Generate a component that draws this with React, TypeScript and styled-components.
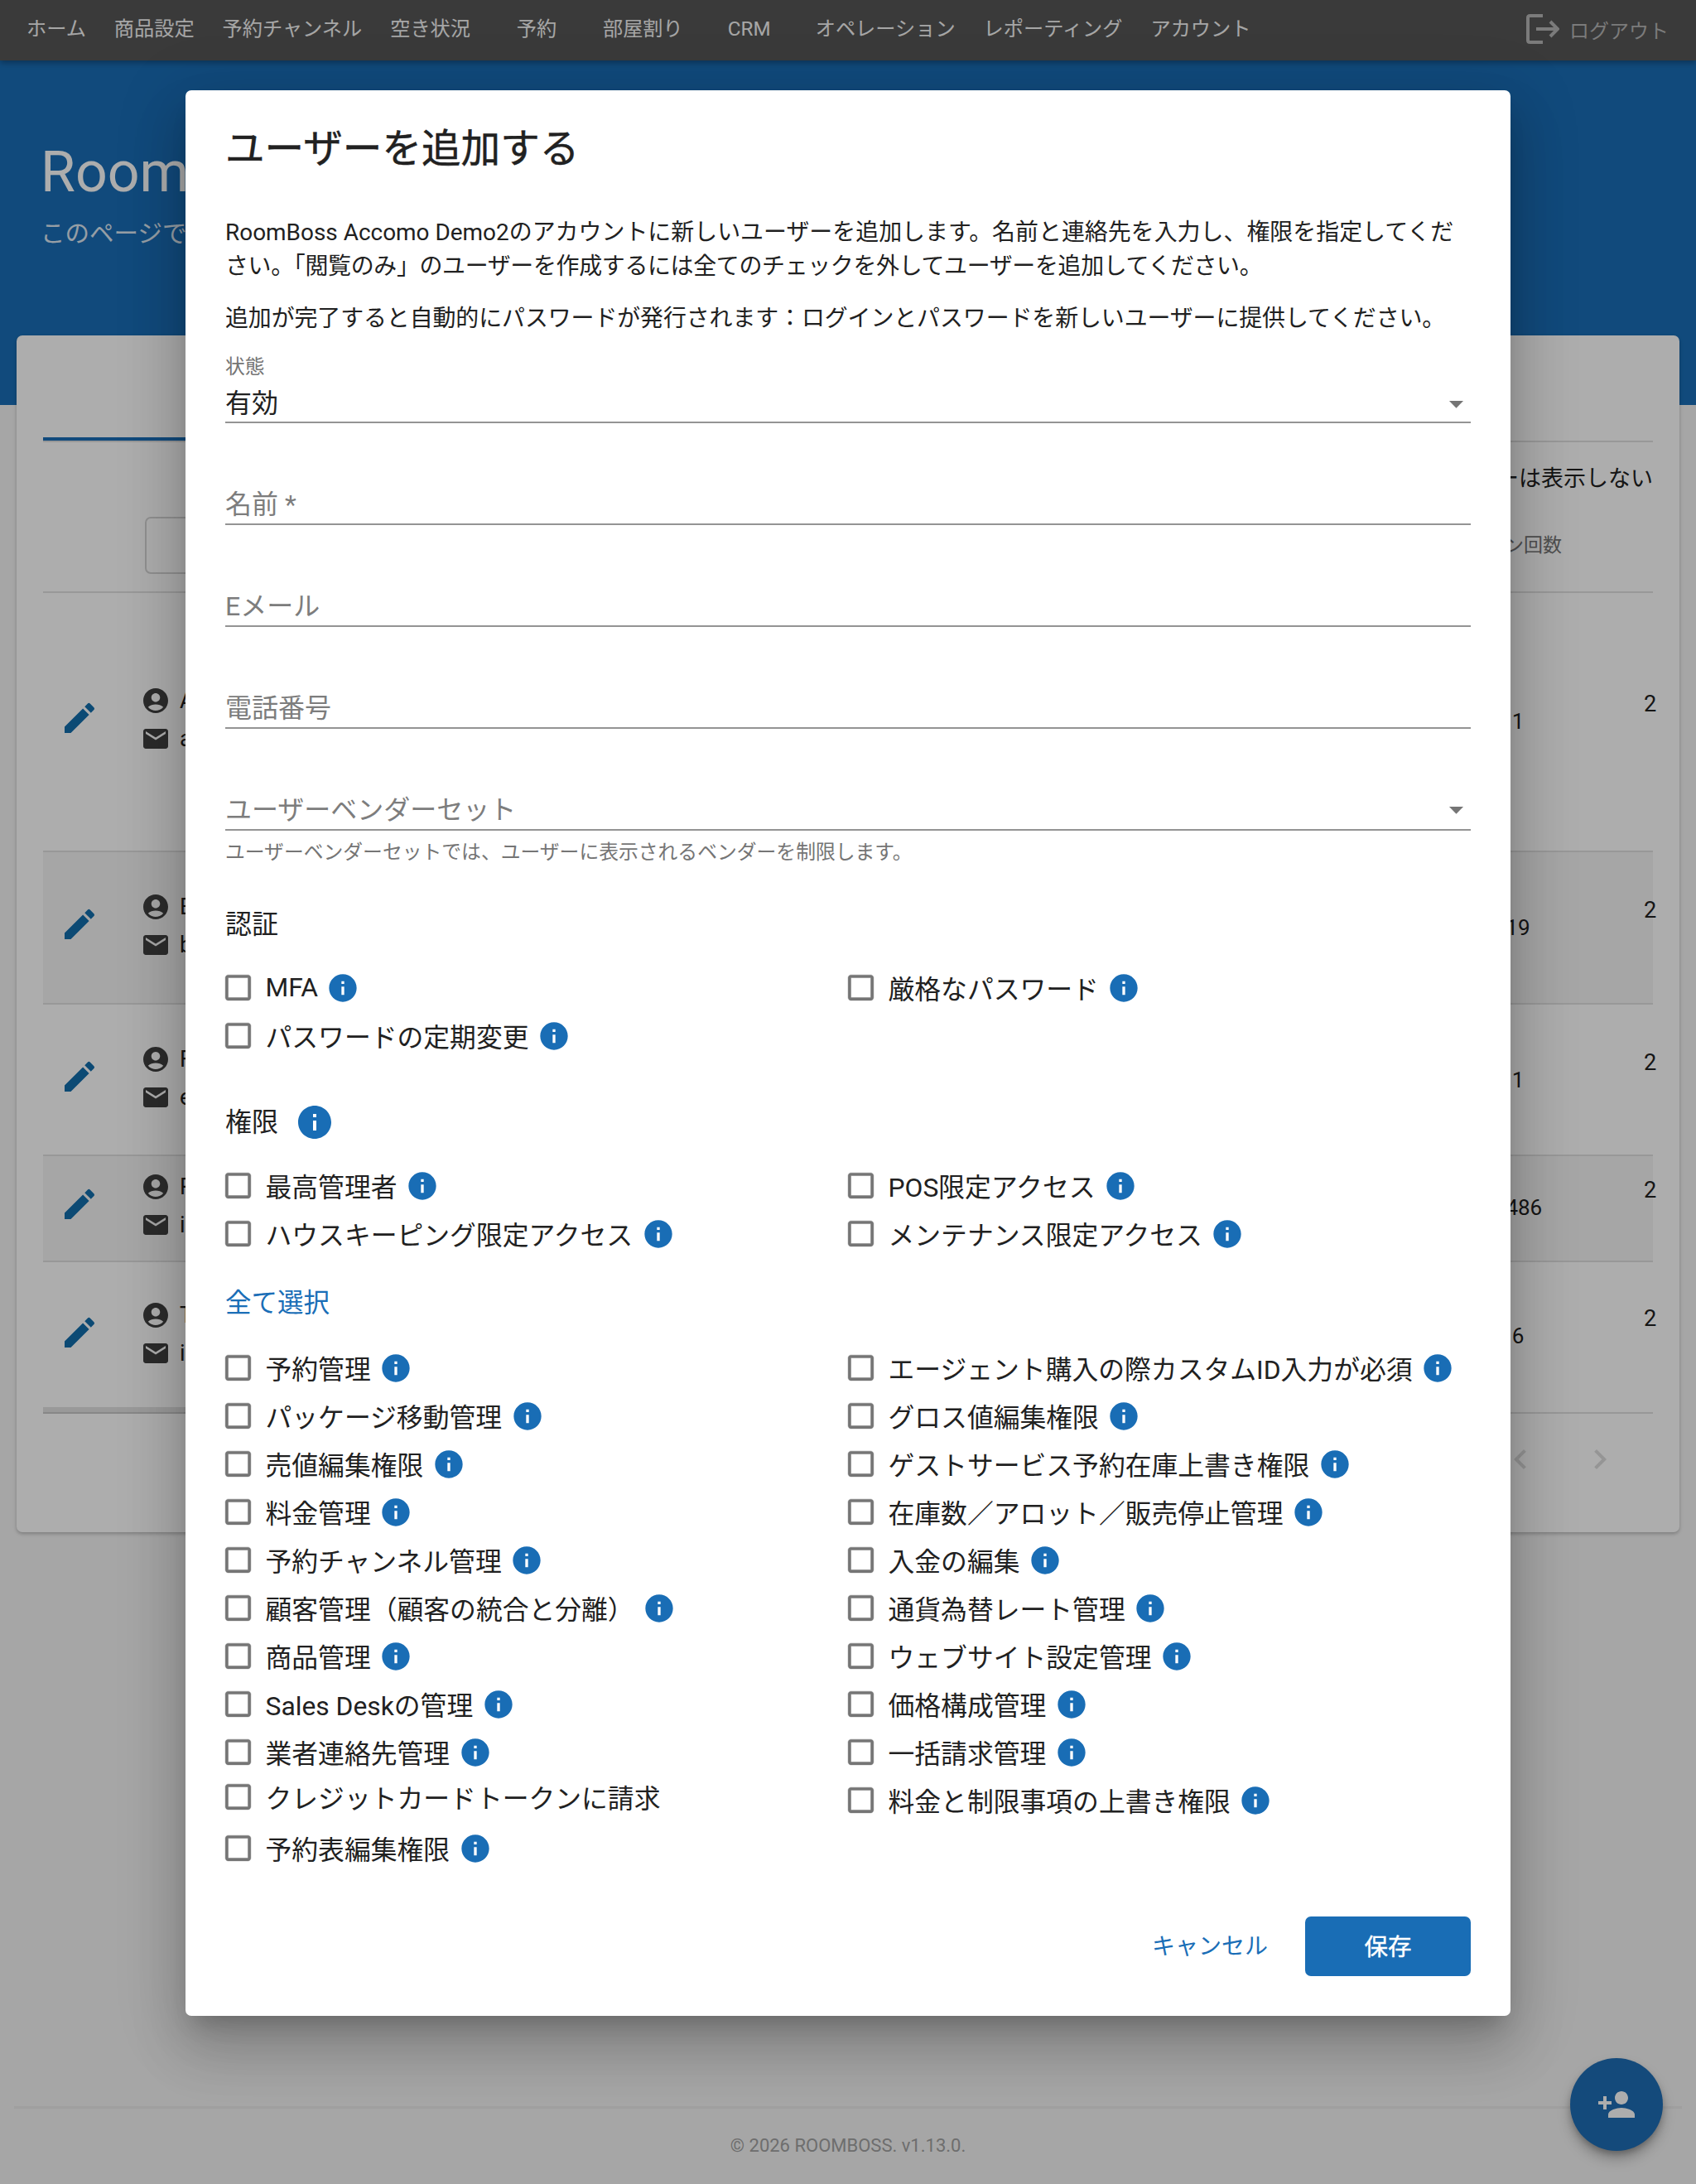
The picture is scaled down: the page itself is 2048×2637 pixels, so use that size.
import styled, { createGlobalStyle } from "styled-components";

const GlobalStyle = createGlobalStyle`
  * {
    box-sizing: border-box;
  }
  html, body {
    margin: 0;
    padding: 0;
  }
  body {
    background: #f5f5f5;
    color: #212121;
    font-family: Roboto, "Noto Sans CJK JP", sans-serif;
    overflow: hidden;
  }
`;

const Page = styled.div`
  position: relative;
  width: 2048px;
  height: 2637px;
  overflow: hidden;
`;

/* ---------- page behind the dialog ---------- */

const NavBar = styled.nav`
  position: relative;
  z-index: 1;
  height: 73px;
  padding: 0 33px 3px 15px;
  display: flex;
  align-items: center;
  background: #565656;
  box-shadow: 0 3px 7px rgba(0, 0, 0, 0.3);
`;

const NavItem = styled.a<{ $wide?: boolean }>`
  min-width: ${(p) => (p.$wide ? "126px" : "0")};
  padding: 0 17px;
  text-align: center;
  font-size: 24.2px;
  line-height: 34px;
  white-space: nowrap;
  color: #f5f5f5;
`;

const Logout = styled.a`
  margin-left: auto;
  display: flex;
  align-items: center;
  gap: 12px;
  font-size: 24px;
  color: #b5b5b5;
`;

const Hero = styled.header`
  height: 416px;
  padding: 85px 0 0 49px;
  background: #1a6eb7;
  color: #fff;
`;

const HeroTitle = styled.h1`
  margin: 0;
  font-size: 68px;
  line-height: 100px;
  font-weight: 400;
`;

const HeroText = styled.p`
  margin: 4px 0 0;
  font-size: 29.5px;
  line-height: 40px;
  opacity: 0.85;
`;

const Card = styled.section`
  margin: -84px 20px 0;
  height: 1445px;
  padding: 0 32px;
  background: #fff;
  border-radius: 7px;
  box-shadow: 0 2px 4px rgba(0, 0, 0, 0.25);
`;

const TabBar = styled.div`
  height: 129px;
  border-bottom: 2px solid #e0e0e0;
`;

const ActiveTab = styled.div`
  width: 400px;
  height: 127px;
  border-bottom: 4px solid #1a6eb7;
`;

const ToggleRow = styled.div`
  padding: 24px 0 0 0;
  text-align: right;
  font-size: 27px;
  line-height: 40px;
`;

const TableHead = styled.div`
  margin-top: 26px;
  padding: 0 110px 21px 123px;
  display: flex;
  justify-content: space-between;
  align-items: center;
  border-bottom: 2px solid #e0e0e0;
`;

const SearchBox = styled.div`
  width: 520px;
  height: 69px;
  border: 2px solid #d4d4d4;
  border-radius: 7px;
`;

const HeadLabel = styled.span`
  padding-bottom: 6px;
  font-size: 23px;
  color: #757575;
`;

const Row = styled.div<{ $height: number; $top: number; $shaded?: boolean }>`
  position: relative;
  height: ${(p) => p.$height}px;
  padding-top: ${(p) => p.$top}px;
  display: grid;
  grid-template-columns: 121px 1607px 106px 110px;
  align-items: start;
  background: ${(p) => (p.$shaded ? "#f5f5f5" : "#fff")};
  border-bottom: 2px solid #e0e0e0;
`;

const ScrollThumb = styled.div`
  position: absolute;
  left: 0;
  bottom: -2px;
  width: 420px;
  height: 8px;
  background: #e2e2e2;
  border-bottom: 2px solid #c8c8c8;
`;

const EditCell = styled.div`
  margin-top: 15px;
  padding-left: 20px;
  display: flex;
`;

const UserCell = styled.div`
  margin-left: -3px;
  display: flex;
  flex-direction: column;
  gap: 10px;
`;

const UserLine = styled.div`
  display: flex;
  align-items: center;
  gap: 11px;
  font-size: 27px;
  line-height: 36px;
`;

const CountCell = styled.div`
  margin-top: 23px;
  text-align: center;
  font-size: 26px;
  line-height: 40px;
`;

const DateCell = styled.div`
  margin-top: 2px;
  padding-left: 99px;
  font-size: 27.2px;
  line-height: 40px;
  white-space: nowrap;
`;

const Pagination = styled.div`
  padding: 31px 40px 0 0;
  display: flex;
  justify-content: flex-end;
  gap: 48px;
`;

const Footer = styled.footer`
  margin: 693px 17px 0;
  padding-top: 29px;
  border-top: 3px solid #ebebeb;
  text-align: center;
  font-size: 22px;
  line-height: 32px;
  color: #a2a2a2;
`;

const Fab = styled.button`
  position: absolute;
  left: 1896px;
  top: 2485px;
  width: 112px;
  height: 112px;
  padding: 0;
  border: 0;
  border-radius: 50%;
  display: flex;
  align-items: center;
  justify-content: center;
  background: #1e6db5;
  box-shadow: 0 5px 9px -2px rgba(0, 0, 0, 0.3), 0 10px 16px 1px rgba(0, 0, 0, 0.2);
`;

/* ---------- dialog ---------- */

const Backdrop = styled.div`
  position: absolute;
  inset: 0;
  z-index: 2;
  padding-top: 109px;
  display: flex;
  justify-content: center;
  align-items: flex-start;
  background: rgba(0, 0, 0, 0.32);
`;

const Dialog = styled.div`
  width: 1600px;
  height: 2325px;
  padding: 33px 48px 0;
  background: #fff;
  border-radius: 7px;
  box-shadow: 0 19px 26px -12px rgba(0, 0, 0, 0.2), 0 41px 65px 5px rgba(0, 0, 0, 0.14),
    0 15px 78px 14px rgba(0, 0, 0, 0.12);
`;

const DialogTitle = styled.h2`
  margin: 0;
  font-size: 47.6px;
  line-height: 76px;
  font-weight: 400;
  -webkit-text-stroke: 0.5px #212121;
`;

const Paragraph = styled.p<{ $top: number }>`
  margin: ${(p) => p.$top}px 0 0;
  font-size: 27.95px;
  line-height: 40.8px;
`;

const TightLine = styled.span<{ $spacing: number }>`
  letter-spacing: ${(p) => p.$spacing}px;
`;

const SmallLabel = styled.div`
  margin-top: 26px;
  font-size: 23.8px;
  line-height: 24px;
  color: #757575;
`;

const SelectValue = styled.div`
  height: 56px;
  padding-top: 12px;
  display: flex;
  justify-content: space-between;
  border-bottom: 2px solid #949494;
  font-size: 32px;
  line-height: 40px;
`;

const Field = styled.div`
  height: 123px;
  padding-bottom: 3px;
  display: flex;
  justify-content: space-between;
  align-items: flex-end;
  border-bottom: 2px solid #949494;
  font-size: 32px;
  line-height: 40px;
  color: #7d7d7d;
`;

const Arrow = styled.svg`
  width: 41px;
  height: 41px;
  margin-right: -3px;
  fill: #757575;
`;

const HelperText = styled.div`
  height: 24px;
  margin-top: 14px;
  font-size: 23.8px;
  line-height: 24px;
  color: #757575;
`;

const SectionTitle = styled.h3<{ $top: number }>`
  margin: ${(p) => p.$top}px 0 0;
  height: 40px;
  display: flex;
  align-items: center;
  gap: 20px;
  font-size: 32px;
  line-height: 40px;
  font-weight: 400;
`;

const SelectAll = styled.a`
  display: block;
  margin-top: 36px;
  font-size: 31.5px;
  line-height: 40px;
  color: #1a6eb7;
`;

const Columns = styled.div<{ $top: number }>`
  margin-top: ${(p) => p.$top}px;
  display: grid;
  grid-template-columns: 752px 752px;
`;

const Column = styled.div`
  display: flex;
  flex-direction: column;
`;

const CheckRow = styled.label<{ $raised?: boolean }>`
  height: 58px;
  padding-bottom: ${(p) => (p.$raised ? "8px" : "0")};
  margin-left: -5px;
  display: flex;
  align-items: center;
  font-size: 31.8px;
  white-space: nowrap;
`;

const Box = styled.svg`
  width: 41px;
  height: 41px;
  margin-right: 12.5px;
  flex-shrink: 0;
  fill: #757575;
  stroke: #757575;
  stroke-width: 0.25;
`;

const InfoMark = styled.svg<{ $size: number; $drop?: number }>`
  width: ${(p) => p.$size}px;
  height: ${(p) => p.$size}px;
  margin-top: ${(p) => p.$drop ?? 0}px;
  flex-shrink: 0;
  fill: #196db5;
`;

const InfoGap = styled.span`
  width: 10.5px;
`;

const Actions = styled.div`
  margin-top: 54px;
  display: flex;
  justify-content: flex-end;
  align-items: center;
  gap: 45px;
`;

const CancelButton = styled.button`
  padding: 0 0 4px;
  border: 0;
  background: none;
  font-family: inherit;
  font-size: 28px;
  color: #1a6eb7;
`;

const SaveButton = styled.button`
  width: 200px;
  height: 72px;
  padding: 0 0 4px;
  border: 0;
  border-radius: 7px;
  background: #196db5;
  font-family: inherit;
  font-size: 28.5px;
  font-weight: 400;
  -webkit-text-stroke: 0.4px #fff;
  color: #fff;
`;

const navItems = [
  { label: "ホーム" },
  { label: "商品設定" },
  { label: "予約チャンネル" },
  { label: "空き状況" },
  { label: "予約", wide: true },
  { label: "部屋割り" },
  { label: "CRM", wide: true },
  { label: "オペレーション" },
  { label: "レポーティング" },
  { label: "アカウント" },
];

const users = [
  { name: "A", mail: "a", count: 1, height: 313, top: 112 },
  { name: "B", mail: "b", count: 19, height: 184, top: 48, shaded: true },
  { name: "F", mail: "e", count: 1, height: 183, top: 48 },
  { name: "R", mail: "i", count: 1486, height: 128, top: 19, shaded: true },
  { name: "T", mail: "i", count: 6, height: 183, top: 46, scroll: true },
];

const permissionsLeft = [
  "予約管理",
  "パッケージ移動管理",
  "売値編集権限",
  "料金管理",
  "予約チャンネル管理",
  "顧客管理（顧客の統合と分離）",
  "商品管理",
  "Sales Deskの管理",
  "業者連絡先管理",
];

const permissionsRight = [
  "エージェント購入の際カスタムID入力が必須",
  "グロス値編集権限",
  "ゲストサービス予約在庫上書き権限",
  "在庫数／アロット／販売停止管理",
  "入金の編集",
  "通貨為替レート管理",
  "ウェブサイト設定管理",
  "価格構成管理",
  "一括請求管理",
  "料金と制限事項の上書き権限",
];

function Info({ size = 40, drop }: { size?: number; drop?: number }) {
  return (
    <InfoMark $size={size} $drop={drop} viewBox="0 0 24 24">
      <path d="M12 2C6.48 2 2 6.48 2 12s4.48 10 10 10 10-4.48 10-10S17.52 2 12 2zm1 15h-2v-6h2v6zm0-8h-2V7h2v2z" />
    </InfoMark>
  );
}

function Check({ label, noInfo, raised }: { label: string; noInfo?: boolean; raised?: boolean }) {
  return (
    <CheckRow $raised={raised}>
      <Box viewBox="0 0 24 24">
        <path d="M19 5v14H5V5h14m0-2H5c-1.1 0-2 .9-2 2v14c0 1.1.9 2 2 2h14c1.1 0 2-.9 2-2V5c0-1.1-.9-2-2-2z" />
      </Box>
      {label}
      {noInfo ? null : (
        <>
          <InfoGap />
          <Info drop={2} />
        </>
      )}
    </CheckRow>
  );
}

function SelectArrow() {
  return (
    <Arrow viewBox="0 0 24 24">
      <path d="M7 10l5 5 5-5z" />
    </Arrow>
  );
}

function App() {
  return (
    <Page>
      <GlobalStyle />
      <NavBar>
        {navItems.map((item) => (
          <NavItem key={item.label} $wide={item.wide}>
            {item.label}
          </NavItem>
        ))}
        <Logout>
          <svg width="40" height="36" viewBox="0 0 40 36" fill="none" stroke="#b5b5b5" strokeWidth="4">
            <path d="M20 2H4.5Q2 2 2 4.5v27Q2 34 4.5 34H20" />
            <path d="M12 18h25M29 9l9 9-9 9" />
          </svg>
          ログアウト
        </Logout>
      </NavBar>
      <Hero>
        <HeroTitle>Room</HeroTitle>
        <HeroText>このページで</HeroText>
      </Hero>
      <Card>
        <TabBar>
          <ActiveTab />
        </TabBar>
        <ToggleRow>無効なユーザーは表示しない</ToggleRow>
        <TableHead>
          <SearchBox />
          <HeadLabel>ログイン回数</HeadLabel>
        </TableHead>
        {users.map((user) => (
          <Row key={user.height + user.name} $height={user.height} $top={user.top} $shaded={user.shaded}>
            <EditCell>
              <svg width="48" height="48" viewBox="0 0 24 24" fill="#136dac">
                <path d="M3 17.25V21h3.75L17.81 9.94l-3.75-3.75L3 17.25zM20.71 7.04c.39-.39.39-1.02 0-1.41l-2.34-2.34a.9959.9959 0 0 0-1.41 0l-1.83 1.83 3.75 3.75 1.83-1.83z" />
              </svg>
            </EditCell>
            <UserCell>
              <UserLine>
                <svg width="36" height="36" viewBox="0 0 24 24" fill="#404040">
                  <path d="M12 2C6.48 2 2 6.48 2 12s4.48 10 10 10 10-4.48 10-10S17.52 2 12 2zm0 4c1.93 0 3.5 1.57 3.5 3.5S13.93 13 12 13s-3.5-1.57-3.5-3.5S10.07 6 12 6zm0 14c-2.03 0-4.43-.82-6.14-2.88C7.55 15.8 9.68 15 12 15s4.45.8 6.14 2.12C16.43 19.18 14.03 20 12 20z" />
                </svg>
                {user.name}
              </UserLine>
              <UserLine>
                <svg width="36" height="36" viewBox="0 0 24 24" fill="#404040">
                  <path d="M20 4H4c-1.1 0-1.99.9-1.99 2L2 18c0 1.1.9 2 2 2h16c1.1 0 2-.9 2-2V6c0-1.1-.9-2-2-2zm0 4l-8 5-8-5V6l8 5 8-5v2z" />
                </svg>
                {user.mail}
              </UserLine>
            </UserCell>
            <CountCell>{user.count}</CountCell>
            <DateCell>2</DateCell>
            {user.scroll ? <ScrollThumb /> : null}
          </Row>
        ))}
        <Pagination>
          <svg width="48" height="48" viewBox="0 0 24 24" fill="#dcdcdc">
            <path d="M15.41 7.41 14 6l-6 6 6 6 1.41-1.41L10.83 12z" />
          </svg>
          <svg width="48" height="48" viewBox="0 0 24 24" fill="#dcdcdc">
            <path d="M10 6 8.59 7.41 13.17 12l-4.58 4.59L10 18l6-6z" />
          </svg>
        </Pagination>
      </Card>
      <Footer>© 2026 ROOMBOSS. v1.13.0.</Footer>
      <Fab>
        <svg width="48" height="48" viewBox="0 0 24 24" fill="#fff">
          <path d="M15 12c2.21 0 4-1.79 4-4s-1.79-4-4-4-4 1.79-4 4 1.79 4 4 4zm-9-2V7H4v3H1v2h3v3h2v-3h3v-2H6zm9 4c-2.67 0-8 1.34-8 4v2h16v-2c0-2.66-5.33-4-8-4z" />
        </svg>
      </Fab>

      <Backdrop>
        <Dialog>
          <DialogTitle>ユーザーを追加する</DialogTitle>
          <Paragraph $top={43}>
            RoomBoss Accomo Demo2のアカウントに新しいユーザーを追加します。名前と連絡先を入力し、権限を指定してくだ
            <br />
            <TightLine $spacing={-0.33}>
              さい。「閲覧のみ」のユーザーを作成するには全てのチェックを外してユーザーを追加してください。
            </TightLine>
          </Paragraph>
          <Paragraph $top={22}>
            <TightLine $spacing={-0.1}>
              追加が完了すると自動的にパスワードが発行されます：ログインとパスワードを新しいユーザーに提供してください。
            </TightLine>
          </Paragraph>
          <SmallLabel>状態</SmallLabel>
          <SelectValue>
            有効
            <SelectArrow />
          </SelectValue>
          <Field>名前 *</Field>
          <Field>Eメール</Field>
          <Field>電話番号</Field>
          <Field>
            ユーザーベンダーセット
            <SelectArrow />
          </Field>
          <HelperText>ユーザーベンダーセットでは、ユーザーに表示されるベンダーを制限します。</HelperText>

          <SectionTitle $top={55}>認証</SectionTitle>
          <Columns $top={27}>
            <Column>
              <Check label="MFA" />
              <Check label="パスワードの定期変更" />
            </Column>
            <Column>
              <Check label="厳格なパスワード" />
            </Column>
          </Columns>

          <SectionTitle $top={56}>
            権限
            <Info size={48} />
          </SectionTitle>
          <Columns $top={27}>
            <Column>
              <Check label="最高管理者" />
              <Check label="ハウスキーピング限定アクセス" />
            </Column>
            <Column>
              <Check label="POS限定アクセス" />
              <Check label="メンテナンス限定アクセス" />
            </Column>
          </Columns>

          <SelectAll>全て選択</SelectAll>
          <Columns $top={28}>
            <Column>
              {permissionsLeft.map((item) => (
                <Check key={item} label={item} />
              ))}
              <Check label="クレジットカードトークンに請求" noInfo raised />
              <Check label="予約表編集権限" />
            </Column>
            <Column>
              {permissionsRight.map((item) => (
                <Check key={item} label={item} />
              ))}
            </Column>
          </Columns>

          <Actions>
            <CancelButton>キャンセル</CancelButton>
            <SaveButton>保存</SaveButton>
          </Actions>
        </Dialog>
      </Backdrop>
    </Page>
  );
}

export default App;
